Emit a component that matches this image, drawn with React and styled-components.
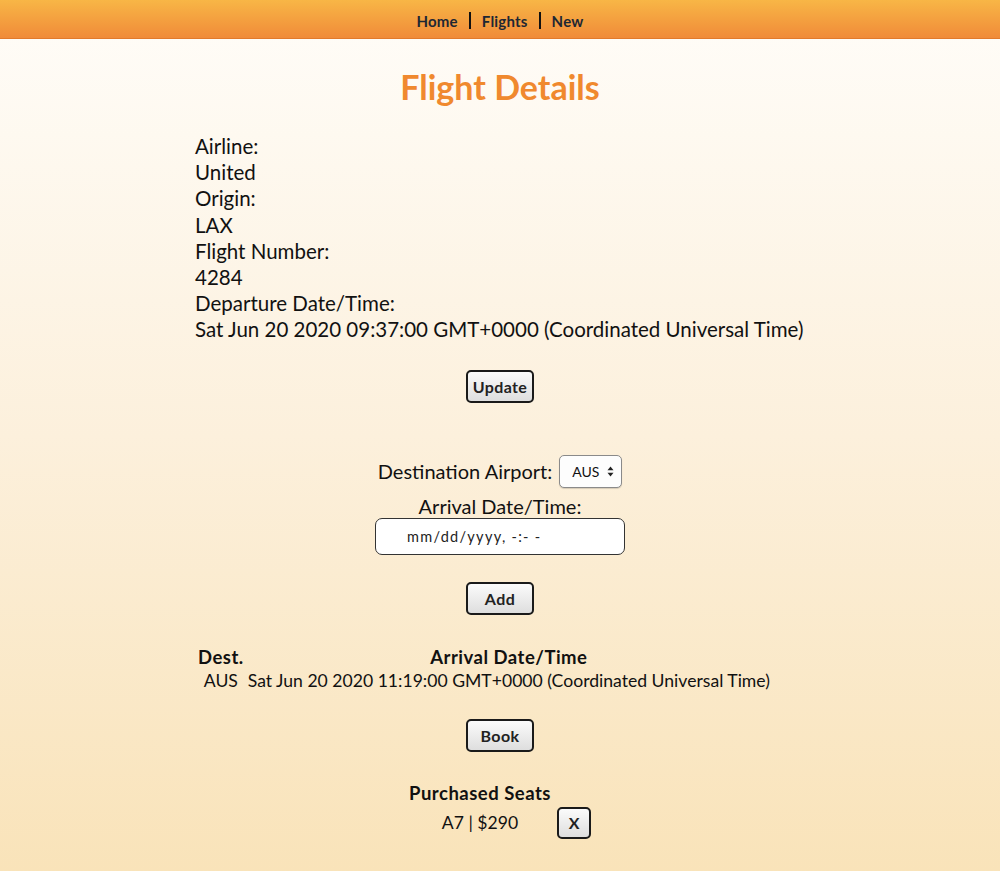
import styled, { createGlobalStyle } from 'styled-components'

const GlobalStyle = createGlobalStyle`
    html, body {
        margin: 0;
        padding: 0;
    }
    body {
        min-height: 100vh;
        background: linear-gradient(180deg, #fffdf9 0%, #fcf0dc 50%, #f9e3b9 100%);
        font-family: Lato, "Noto Sans", sans-serif;
        color: #111;
    }
`

const details = [
    ['Airline:', 'United'],
    ['Origin:', 'LAX'],
    ['Flight Number:', '4284'],
    ['Departure Date/Time:', 'Sat Jun 20 2020 09:37:00 GMT+0000 (Coordinated Universal Time)'],
]

const App = () => {
    return (
        <>
            <GlobalStyle />
            <Page>
                <NavBar>
                    <NavLink href="#">Home</NavLink>
                    <Divider />
                    <NavLink href="#">Flights</NavLink>
                    <Divider />
                    <NavLink href="#">New</NavLink>
                </NavBar>
                <Title>Flight Details</Title>
                <Content>
                    <DetailList>
                        {details.map(([label, value]) => (
                            <div key={label}>
                                <Line>{label}</Line>
                                <Line>{value}</Line>
                            </div>
                        ))}
                    </DetailList>
                    <Button $gap={27}>Update</Button>
                    <Form>
                        <FieldRow>
                            <label>Destination Airport:</label>
                            <SelectWrap>
                                <Select defaultValue="AUS">
                                    <option>AUS</option>
                                    <option>LAX</option>
                                    <option>JFK</option>
                                </Select>
                                <Arrows width="7" height="11" viewBox="0 0 7 11">
                                    <path d="M3.5 0.5 L6.5 4.2 H0.5 Z" fill="#222" />
                                    <path d="M3.5 10.5 L6.5 6.8 H0.5 Z" fill="#222" />
                                </Arrows>
                            </SelectWrap>
                        </FieldRow>
                        <label>Arrival Date/Time:</label>
                        <DateInput type="text" placeholder="mm/dd/yyyy, -:- -" />
                        <Button $gap={27}>Add</Button>
                    </Form>
                    <DestTable>
                        <thead>
                            <tr>
                                <Th>Dest.</Th>
                                <Th>Arrival Date/Time</Th>
                            </tr>
                        </thead>
                        <tbody>
                            <tr>
                                <Td>AUS</Td>
                                <Td>Sat Jun 20 2020 11:19:00 GMT+0000 (Coordinated Universal Time)</Td>
                            </tr>
                        </tbody>
                    </DestTable>
                    <Button $gap={25}>Book</Button>
                    <SeatTable>
                        <thead>
                            <tr>
                                <Th>Purchased Seats</Th>
                                <Th />
                            </tr>
                        </thead>
                        <tbody>
                            <tr>
                                <Td>A7 | $290</Td>
                                <Td><SmallButton>X</SmallButton></Td>
                            </tr>
                        </tbody>
                    </SeatTable>
                </Content>
            </Page>
        </>
    )
}

export default App

const Page = styled.div`
    display: flex;
    flex-direction: column;
    align-items: center;
    padding-bottom: 30px;
`
const NavBar = styled.nav`
    width: 100%;
    height: 39px;
    box-sizing: border-box;
    padding-top: 3px;
    display: flex;
    justify-content: center;
    align-items: center;
    gap: 11px;
    background: linear-gradient(180deg, #f8b646 0%, #f08b39 100%);
    border-bottom: 1px solid #e27a2c;
`
const NavLink = styled.a`
    font-weight: 700;
    font-size: 15px;
    color: #1d2733;
    text-decoration: none;
    letter-spacing: 0.2px;
`
const Divider = styled.span`
    width: 2px;
    height: 17px;
    background: #111;
`
const Title = styled.h1`
    margin: 29px 0 0;
    font-size: 34px;
    font-weight: 700;
    color: #f0892e;
    line-height: 38px;
`
const Content = styled.main`
    width: 610px;
    display: flex;
    flex-direction: column;
    align-items: center;
`
const DetailList = styled.div`
    align-self: stretch;
    margin-top: 27px;
    font-size: 20.5px;
    line-height: 26.2px;
`
const Line = styled.div`
    white-space: nowrap;
`
const Button = styled.button`
    margin-top: ${props => props.$gap}px;
    width: 68px;
    height: 33px;
    border: 2px solid #1a1a1a;
    border-radius: 5px;
    background: linear-gradient(180deg, #fbfbfb 0%, #dedede 100%);
    font-family: Lato, "Noto Sans", sans-serif;
    font-weight: 700;
    font-size: 16px;
    letter-spacing: 0.4px;
    color: #222;
    cursor: pointer;
    padding: 0;
`
const Form = styled.div`
    margin-top: 52px;
    display: flex;
    flex-direction: column;
    align-items: center;
    font-size: 20px;
    line-height: 28px;
`
const FieldRow = styled.div`
    display: flex;
    align-items: center;
    gap: 7px;
    margin-bottom: 4px;
`
const SelectWrap = styled.div`
    position: relative;
`
const Select = styled.select`
    appearance: none;
    width: 63px;
    height: 33px;
    padding: 0 0 0 12px;
    border: 1px solid #8a8a8a;
    border-radius: 5px;
    background: #fdfdfd;
    font-family: Lato, "Noto Sans", sans-serif;
    font-size: 14px;
    color: #111;
    box-shadow: 0 1px 1px rgba(0,0,0,0.15);
`
const Arrows = styled.svg`
    position: absolute;
    right: 8px;
    top: 11px;
    pointer-events: none;
`
const DateInput = styled.input`
    margin-top: -2px;
    width: 250px;
    height: 37px;
    box-sizing: border-box;
    padding: 0 0 0 31px;
    border: 1px solid #333;
    border-radius: 7px;
    background: #fff;
    font-family: Lato, "Noto Sans", sans-serif;
    font-size: 14.5px;
    letter-spacing: 1.3px;
    &::placeholder {
        color: #222;
        opacity: 1;
    }
`
const DestTable = styled.table`
    align-self: flex-start;
    margin-top: 29px;
    border-spacing: 2px;
`
const SeatTable = styled.table`
    margin-top: 28px;
    border-spacing: 2px;
`
const Th = styled.th`
    padding: 1px;
    font-weight: 700;
    font-size: 18.5px;
    letter-spacing: 0.5px;
    line-height: 20px;
`
const Td = styled.td`
    padding: 1px;
    text-align: center;
    vertical-align: middle;
    line-height: 20px;
    font-size: 17.6px;
    color: #111;
    white-space: nowrap;
`
const SmallButton = styled.button`
    display: block;
    width: 34px;
    height: 32px;
    margin-left: 2px;
    border: 2px solid #1a1a1a;
    border-radius: 5px;
    background: linear-gradient(180deg, #fbfbfb 0%, #dedede 100%);
    font-family: Lato, "Noto Sans", sans-serif;
    font-weight: 700;
    font-size: 16px;
    color: #222;
    padding: 0;
`
